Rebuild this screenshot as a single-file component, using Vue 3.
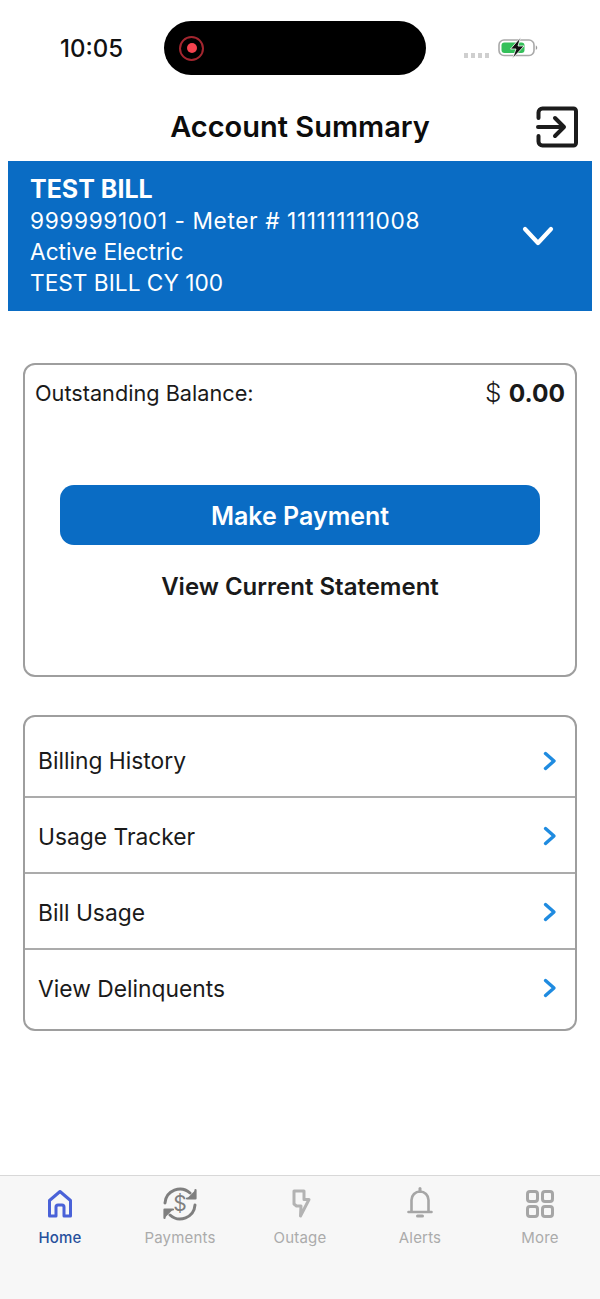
<script setup>
const rows = ['Billing History', 'Usage Tracker', 'Bill Usage', 'View Delinquents']
const tabs = ['Home', 'Payments', 'Outage', 'Alerts', 'More']
</script>

<template>
  <div class="screen">
    <div class="status-bar">
      <span class="time">10:05</span>
      <div class="island">
        <span class="rec"><span class="rec-dot"></span></span>
      </div>
      <div class="status-right">
        <span class="signal"><i></i><i></i><i></i><i></i></span>
        <svg class="battery" width="40" height="22" viewBox="0 0 40 22">
          <rect x="1" y="3" width="35" height="15.500" rx="5" fill="none" stroke="#a9a9a9" stroke-width="1.600" />
          <rect x="3.500" y="5.500" width="23" height="10.500" rx="3" fill="#34c05a" />
          <path d="M37.800 8.500v4.500c.9-.3 1.400-1.200 1.400-2.200s-.5-2-1.400-2.300z" fill="#9a9a9a" />
          <path d="M22.500 0.500 L12.500 12 H18 L14.500 21.500 L26 9 H20 Z" fill="#111" stroke="#fff" stroke-width=".8" />
        </svg>
      </div>
    </div>

    <header class="title-bar">
      <h1>Account Summary</h1>
      <svg class="logout" width="42" height="42" viewBox="0 0 42 42" fill="none" stroke="#1c1c1c" stroke-width="4" stroke-linecap="round" stroke-linejoin="round">
        <path d="M2.500 12V6.500a4 4 0 0 1 4-4h31a2.500 2.500 0 0 1 2.500 2.500v32a2.500 2.500 0 0 1-2.500 2.500h-31a4 4 0 0 1-4-4V30" />
        <path d="M2 21h25M19 12l9 9-9 9" />
      </svg>
    </header>

    <section class="account">
      <div>
        <div class="account-name">TEST BILL</div>
        <div class="meter">9999991001 - Meter # 111111111008</div>
        <div>Active Electric</div>
        <div>TEST BILL CY 100</div>
      </div>
      <svg width="32" height="22" viewBox="0 0 32 22" fill="none" stroke="#fff" stroke-width="4.200" stroke-linecap="round" stroke-linejoin="round">
        <path d="M3 4l13 14L29 4" />
      </svg>
    </section>

    <section class="balance-card">
      <div class="balance-row">
        <span>Outstanding Balance:</span>
        <span class="amount"><span class="dollar">$</span> <b>0.00</b></span>
      </div>
      <button class="pay-btn">Make Payment</button>
      <div class="statement">View Current Statement</div>
    </section>

    <section class="list-card">
      <div v-for="row in rows" :key="row" class="list-row">
        <span>{{ row }}</span>
        <svg width="14" height="20" viewBox="0 0 14 20" fill="none" stroke="#1f8be0" stroke-width="3.400" stroke-linecap="round" stroke-linejoin="round">
          <path d="M2.500 2.500L11 10l-8.500 7.500" />
        </svg>
      </div>
    </section>

    <nav class="tab-bar">
      <div v-for="(tab, i) in tabs" :key="tab" class="tab" :class="{ active: i === 0 }">
        <svg v-if="i === 0" width="34" height="34" viewBox="0 0 34 34" fill="none" stroke="#4a62d8" stroke-width="3" stroke-linejoin="round">
          <path d="M6.500 29V13.500L17 4.500l10.500 9V29h-6.500V20a2 2 0 0 0-2-2h-4a2 2 0 0 0-2 2v9z" />
        </svg>
        <svg v-else-if="i === 1" width="36" height="34" viewBox="0 0 36 34" fill="none" stroke="#7f7f7f" stroke-width="3" stroke-linecap="round" stroke-linejoin="round">
          <path d="M3 16A15 15 0 0 1 28 6" />
          <path d="M33 18A15 15 0 0 1 8 28" />
          <path d="M33.500 3v8.500h-8.500M2.500 31v-8.500h8.500" fill="#7f7f7f" stroke-width="2.200" />
          <text x="18" y="24" text-anchor="middle" font-family="Inter, sans-serif" font-size="21" fill="#7f7f7f" stroke="none">$</text>
        </svg>
        <svg v-else-if="i === 2" width="24" height="34" viewBox="0 0 24 34" fill="none" stroke="#b3b3b3" stroke-width="3" stroke-linejoin="round">
          <path d="M6 4h10v8.500h5L12.500 29l.5-10H8.500L6 17z" />
        </svg>
        <svg v-else-if="i === 3" width="26" height="34" viewBox="0 0 26 34" fill="none" stroke="#a6a6a6" stroke-width="2.600" stroke-linecap="round">
          <path d="M4.500 25V13a8.500 8.500 0 0 1 17 0v12M1.500 25h23" />
          <path d="M13 1.500v3" stroke-width="3" />
          <path d="M10.500 29h5" stroke-width="3" />
        </svg>
        <svg v-else width="30" height="34" viewBox="0 0 30 34" fill="none" stroke="#a6a6a6" stroke-width="3">
          <rect x="2.500" y="4.500" width="10" height="10" rx="2.500" />
          <rect x="17.500" y="4.500" width="10" height="10" rx="2.500" />
          <rect x="2.500" y="19.500" width="10" height="10" rx="2.500" />
          <rect x="17.500" y="19.500" width="10" height="10" rx="2.500" />
        </svg>
        <span>{{ tab }}</span>
      </div>
    </nav>
  </div>
</template>

<style>
html,
body {
  margin: 0;
  background: #fff;
}
</style>

<style scoped>
.screen {
  position: relative;
  width: 600px;
  height: 1299px;
  overflow: hidden;
  background: #fff;
  display: flex;
  flex-direction: column;
  font-family: Inter, 'Liberation Sans', sans-serif;
  color: #1a1a1a;
}
.status-bar {
  height: 96px;
  flex: none;
  display: flex;
  align-items: center;
  box-sizing: border-box;
}
.time {
  width: 164px;
  padding-left: 60px;
  box-sizing: border-box;
  font-size: 24px;
  font-weight: 500;
  color: #111;
}
.island {
  width: 262px;
  height: 54px;
  border-radius: 27px;
  background: #000;
  display: flex;
  align-items: center;
  padding-left: 15px;
  box-sizing: border-box;
}
.rec {
  width: 25px;
  height: 25px;
  border: 2px solid #a3262f;
  border-radius: 50%;
  box-sizing: border-box;
  display: flex;
  align-items: center;
  justify-content: center;
}
.rec-dot {
  width: 10px;
  height: 10px;
  border-radius: 50%;
  background: #f5434f;
}
.status-right {
  display: flex;
  align-items: center;
  gap: 9px;
  margin-left: 38px;
}
.signal {
  display: flex;
  gap: 3px;
  margin-top: 14px;
}
.signal i {
  width: 4px;
  height: 5px;
  background: #cfcfcf;
}
.battery {
  margin-top: 0;
}
.title-bar {
  height: 65px;
  flex: none;
  display: flex;
  align-items: center;
  justify-content: center;
  position: relative;
}
.title-bar h1 {
  margin: -4px 0 0;
  font-size: 29px;
  font-weight: 600;
  color: #0c0c0c;
}
.logout {
  position: absolute;
  right: 22px;
  top: 10px;
}
.account {
  margin: 0 8px;
  height: 150px;
  flex: none;
  box-sizing: border-box;
  padding: 0 38px 0 22px;
  background: #0a6cc4;
  color: #fff;
  display: flex;
  align-items: center;
  justify-content: space-between;
  font-size: 22.700px;
  line-height: 31px;
}
.account-name {
  font-size: 25px;
  font-weight: 700;
}
.meter {
  letter-spacing: 0.6px;
}
.balance-card {
  margin: 52px 23px 0;
  height: 314px;
  flex: none;
  box-sizing: border-box;
  border: 2px solid #9e9e9e;
  border-radius: 12px;
  padding: 11px 10px 0;
  display: flex;
  flex-direction: column;
}
.balance-row {
  display: flex;
  justify-content: space-between;
  align-items: center;
  font-size: 21.700px;
  line-height: 34px;
}
.amount {
  font-size: 26px;
}
.amount b {
  font-size: 24.500px;
  font-weight: 700;
}
.dollar {
  font-weight: 300;
}
.pay-btn {
  margin: 75px 25px 0;
  height: 60px;
  padding: 2px 0 0;
  border: none;
  border-radius: 14px;
  background: #0a6cc4;
  color: #fff;
  font-family: inherit;
  font-size: 25px;
  font-weight: 600;
}
.statement {
  margin-top: 26px;
  text-align: center;
  font-size: 24px;
  line-height: 32px;
  font-weight: 600;
}
.list-card {
  margin: 38px 23px 0;
  flex: none;
  border: 2px solid #9e9e9e;
  border-radius: 12px;
}
.list-row {
  height: 76px;
  box-sizing: border-box;
  padding: 2px 18px 0 13px;
  display: flex;
  align-items: center;
  justify-content: space-between;
  font-size: 22.800px;
  border-top: 2px solid #ababab;
}
.list-row:first-child {
  height: 79px;
  border-top: none;
  padding-top: 8px;
}
.list-row:last-child {
  height: 81px;
  padding-bottom: 5px;
}
.tab-bar {
  position: absolute;
  left: 0;
  right: 0;
  bottom: 0;
  height: 124px;
  box-sizing: border-box;
  padding: 11px 0 0;
  background: #f7f7f7;
  border-top: 1.500px solid #d8d8d8;
  display: flex;
}
.tab {
  flex: 1;
  display: flex;
  flex-direction: column;
  align-items: center;
  gap: 7px;
  color: #ababab;
  font-size: 15px;
  font-weight: 400;
  letter-spacing: 0.2px;
}
.tab.active {
  color: #27509c;
  font-weight: 500;
}
</style>
